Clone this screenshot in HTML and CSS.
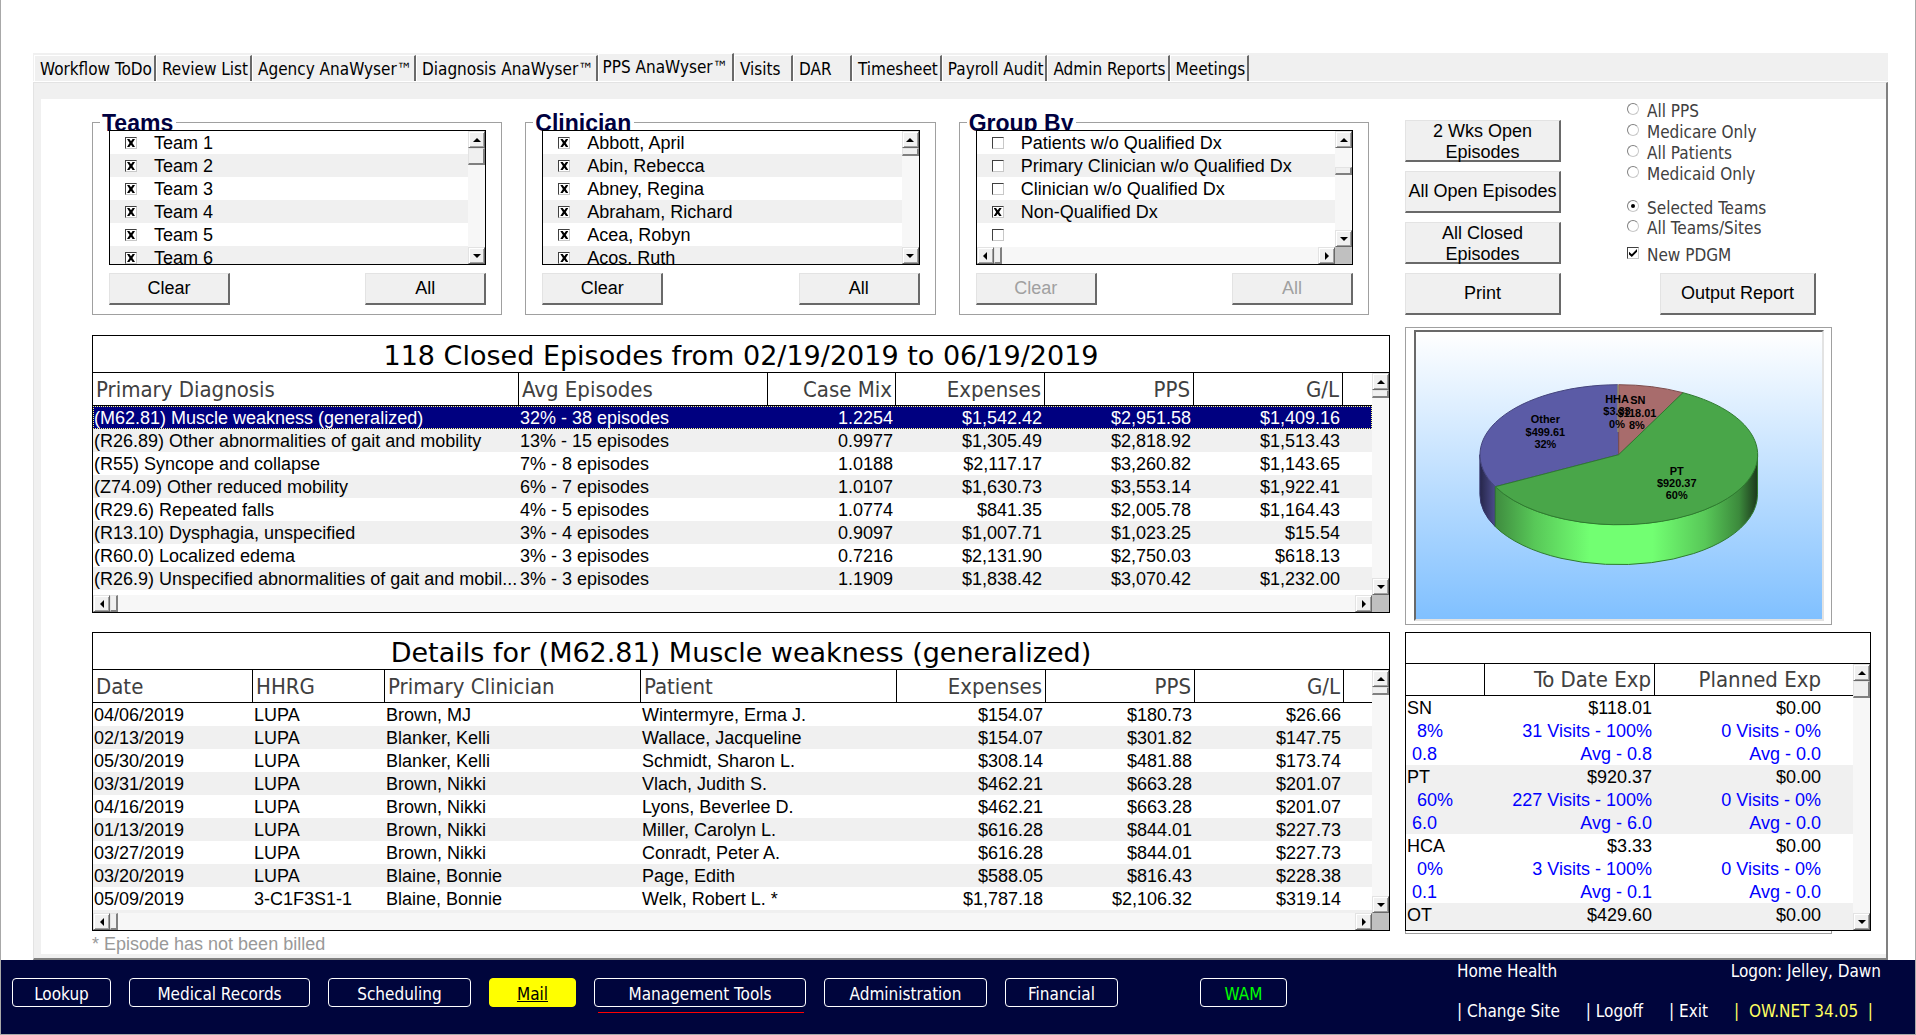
FILE: index.html
```html
<!DOCTYPE html>
<html lang="en">
    <head>
        <meta charset="utf-8">
        <meta name="viewport" content="width=device-width, initial-scale=1">
        <link rel="stylesheet" href="styles.css">
        <title>PPS AnaWyser</title>
    </head>
    <body>
        <div class="workspace">
            <div class="tabs" role="tablist">
                <button type="button" class="tab" role="tab">Workflow ToDo</button>
                <button type="button" class="tab" role="tab">Review List</button>
                <button type="button" class="tab" role="tab">Agency AnaWyser™</button>
                <button type="button" class="tab" role="tab">Diagnosis AnaWyser™</button>
                <button type="button" class="tab selected" role="tab" aria-selected="true">PPS AnaWyser™</button>
                <button type="button" class="tab" role="tab">Visits</button>
                <button type="button" class="tab" role="tab">DAR</button>
                <button type="button" class="tab" role="tab">Timesheet</button>
                <button type="button" class="tab" role="tab">Payroll Audit</button>
                <button type="button" class="tab" role="tab">Admin Reports</button>
                <button type="button" class="tab" role="tab">Meetings</button>
            </div>
            <div class="pane">
                <main class="page">
                    <div class="main">
                        <div class="filters">
                            <fieldset class="filter">
                                <legend>Teams</legend>
                                <div class="list">
                                    <div class="listRows">
                                        <label class="item"><input type="checkbox" class="box" checked>Team 1</label>
                                        <label class="item"><input type="checkbox" class="box" checked>Team 2</label>
                                        <label class="item"><input type="checkbox" class="box" checked>Team 3</label>
                                        <label class="item"><input type="checkbox" class="box" checked>Team 4</label>
                                        <label class="item"><input type="checkbox" class="box" checked>Team 5</label>
                                        <label class="item"><input type="checkbox" class="box" checked>Team 6</label>
                                    </div>
                                    <div class="vbar">
                                        <button type="button" class="arrow up" aria-label="Up"></button>
                                        <div class="thumb tall"></div>
                                        <button type="button" class="arrow down" aria-label="Down"></button>
                                    </div>
                                </div>
                                <div class="filterButtons">
                                    <button type="button" class="btn">Clear</button>
                                    <button type="button" class="btn">All</button>
                                </div>
                            </fieldset>
                            <fieldset class="filter">
                                <legend>Clinician</legend>
                                <div class="list">
                                    <div class="listRows">
                                        <label class="item"><input type="checkbox" class="box" checked>Abbott, April</label>
                                        <label class="item"><input type="checkbox" class="box" checked>Abin, Rebecca</label>
                                        <label class="item"><input type="checkbox" class="box" checked>Abney, Regina</label>
                                        <label class="item"><input type="checkbox" class="box" checked>Abraham, Richard</label>
                                        <label class="item"><input type="checkbox" class="box" checked>Acea, Robyn</label>
                                        <label class="item"><input type="checkbox" class="box" checked>Acos, Ruth</label>
                                    </div>
                                    <div class="vbar">
                                        <button type="button" class="arrow up" aria-label="Up"></button>
                                        <div class="thumb"></div>
                                        <button type="button" class="arrow down" aria-label="Down"></button>
                                    </div>
                                </div>
                                <div class="filterButtons">
                                    <button type="button" class="btn">Clear</button>
                                    <button type="button" class="btn">All</button>
                                </div>
                            </fieldset>
                            <fieldset class="filter">
                                <legend>Group By</legend>
                                <div class="list withHbar">
                                    <div class="listRows">
                                        <label class="item"><input type="checkbox" class="box">Patients w/o Qualified Dx</label>
                                        <label class="item"><input type="checkbox" class="box">Primary Clinician w/o Qualified Dx</label>
                                        <label class="item"><input type="checkbox" class="box">Clinician w/o Qualified Dx</label>
                                        <label class="item"><input type="checkbox" class="box" checked>Non-Qualified Dx</label>
                                        <label class="item"><input type="checkbox" class="box" aria-label="Empty"></label>
                                    </div>
                                    <div class="vbar">
                                        <button type="button" class="arrow up" aria-label="Up"></button>
                                        <div class="thumb scrolled"></div>
                                        <button type="button" class="arrow down" aria-label="Down"></button>
                                    </div>
                                    <div class="hbar">
                                        <button type="button" class="arrow left" aria-label="Left"></button>
                                        <div class="thumb"></div>
                                        <button type="button" class="arrow right" aria-label="Right"></button>
                                    </div>
                                    <div class="corner"></div>
                                </div>
                                <div class="filterButtons">
                                    <button type="button" class="btn" disabled>Clear</button>
                                    <button type="button" class="btn" disabled>All</button>
                                </div>
                            </fieldset>
                        </div>

                        <section class="grid">
                            <h2 class="gridTitle" id="episodesTitle">118 Closed Episodes from 02/19/2019 to 06/19/2019</h2>
                            <div class="gridBody episodesBody">
                                <table class="data" aria-labelledby="episodesTitle">
                                    <colgroup>
                                        <col class="e1"><col class="e2"><col class="e3"><col class="money"><col class="money"><col class="money"><col>
                                    </colgroup>
                                    <thead>
                                        <tr><th>Primary Diagnosis</th><th>Avg Episodes</th><th class="num">Case Mix</th><th class="num">Expenses</th><th class="num">PPS</th><th class="num">G/L</th><th></th></tr>
                                    </thead>
                                    <tbody>
                                        <tr class="current"><td>(M62.81) Muscle weakness (generalized)</td><td>32% - 38 episodes</td><td class="num">1.2254</td><td class="num">$1,542.42</td><td class="num">$2,951.58</td><td class="num">$1,409.16</td><td></td></tr>
                                        <tr><td>(R26.89) Other abnormalities of gait and mobility</td><td>13% - 15 episodes</td><td class="num">0.9977</td><td class="num">$1,305.49</td><td class="num">$2,818.92</td><td class="num">$1,513.43</td><td></td></tr>
                                        <tr><td>(R55) Syncope and collapse</td><td>7% - 8 episodes</td><td class="num">1.0188</td><td class="num">$2,117.17</td><td class="num">$3,260.82</td><td class="num">$1,143.65</td><td></td></tr>
                                        <tr><td>(Z74.09) Other reduced mobility</td><td>6% - 7 episodes</td><td class="num">1.0107</td><td class="num">$1,630.73</td><td class="num">$3,553.14</td><td class="num">$1,922.41</td><td></td></tr>
                                        <tr><td>(R29.6) Repeated falls</td><td>4% - 5 episodes</td><td class="num">1.0774</td><td class="num">$841.35</td><td class="num">$2,005.78</td><td class="num">$1,164.43</td><td></td></tr>
                                        <tr><td>(R13.10) Dysphagia, unspecified</td><td>3% - 4 episodes</td><td class="num">0.9097</td><td class="num">$1,007.71</td><td class="num">$1,023.25</td><td class="num">$15.54</td><td></td></tr>
                                        <tr><td>(R60.0) Localized edema</td><td>3% - 3 episodes</td><td class="num">0.7216</td><td class="num">$2,131.90</td><td class="num">$2,750.03</td><td class="num">$618.13</td><td></td></tr>
                                        <tr><td>(R26.9) Unspecified abnormalities of gait and mobil...</td><td>3% - 3 episodes</td><td class="num">1.1909</td><td class="num">$1,838.42</td><td class="num">$3,070.42</td><td class="num">$1,232.00</td><td></td></tr>
                                    </tbody>
                                </table>
                                <div class="vbar">
                                    <button type="button" class="arrow up" aria-label="Up"></button>
                                    <div class="thumb"></div>
                                    <button type="button" class="arrow down" aria-label="Down"></button>
                                </div>
                            </div>
                            <div class="gridFoot">
                                <div class="hbar">
                                    <button type="button" class="arrow left" aria-label="Left"></button>
                                    <div class="thumb"></div>
                                    <button type="button" class="arrow right" aria-label="Right"></button>
                                </div>
                                <div class="corner"></div>
                            </div>
                        </section>

                        <section class="grid">
                            <h2 class="gridTitle" id="detailsTitle">Details for (M62.81) Muscle weakness (generalized)</h2>
                            <div class="gridBody detailsBody">
                                <table class="data" aria-labelledby="detailsTitle">
                                    <colgroup>
                                        <col class="d1"><col class="d2"><col class="d3"><col class="d4"><col class="money"><col class="money"><col class="money"><col>
                                    </colgroup>
                                    <thead>
                                        <tr><th>Date</th><th>HHRG</th><th>Primary Clinician</th><th>Patient</th><th class="num">Expenses</th><th class="num">PPS</th><th class="num">G/L</th><th></th></tr>
                                    </thead>
                                    <tbody>
                                        <tr><td>04/06/2019</td><td>LUPA</td><td>Brown, MJ</td><td>Wintermyre, Erma J.</td><td class="num">$154.07</td><td class="num">$180.73</td><td class="num">$26.66</td><td></td></tr>
                                        <tr><td>02/13/2019</td><td>LUPA</td><td>Blanker, Kelli</td><td>Wallace, Jacqueline</td><td class="num">$154.07</td><td class="num">$301.82</td><td class="num">$147.75</td><td></td></tr>
                                        <tr><td>05/30/2019</td><td>LUPA</td><td>Blanker, Kelli</td><td>Schmidt, Sharon L.</td><td class="num">$308.14</td><td class="num">$481.88</td><td class="num">$173.74</td><td></td></tr>
                                        <tr><td>03/31/2019</td><td>LUPA</td><td>Brown, Nikki</td><td>Vlach, Judith S.</td><td class="num">$462.21</td><td class="num">$663.28</td><td class="num">$201.07</td><td></td></tr>
                                        <tr><td>04/16/2019</td><td>LUPA</td><td>Brown, Nikki</td><td>Lyons, Beverlee D.</td><td class="num">$462.21</td><td class="num">$663.28</td><td class="num">$201.07</td><td></td></tr>
                                        <tr><td>01/13/2019</td><td>LUPA</td><td>Brown, Nikki</td><td>Miller, Carolyn L.</td><td class="num">$616.28</td><td class="num">$844.01</td><td class="num">$227.73</td><td></td></tr>
                                        <tr><td>03/27/2019</td><td>LUPA</td><td>Brown, Nikki</td><td>Conradt, Peter A.</td><td class="num">$616.28</td><td class="num">$844.01</td><td class="num">$227.73</td><td></td></tr>
                                        <tr><td>03/20/2019</td><td>LUPA</td><td>Blaine, Bonnie</td><td>Page, Edith</td><td class="num">$588.05</td><td class="num">$816.43</td><td class="num">$228.38</td><td></td></tr>
                                        <tr><td>05/09/2019</td><td>3-C1F3S1-1</td><td>Blaine, Bonnie</td><td>Welk, Robert L. *</td><td class="num">$1,787.18</td><td class="num">$2,106.32</td><td class="num">$319.14</td><td></td></tr>
                                        <tr><td colspan="8"></td></tr>
                                    </tbody>
                                </table>
                                <div class="vbar">
                                    <button type="button" class="arrow up" aria-label="Up"></button>
                                    <div class="thumb"></div>
                                    <button type="button" class="arrow down" aria-label="Down"></button>
                                </div>
                            </div>
                            <div class="gridFoot">
                                <div class="hbar">
                                    <button type="button" class="arrow left" aria-label="Left"></button>
                                    <div class="thumb"></div>
                                    <button type="button" class="arrow right" aria-label="Right"></button>
                                </div>
                                <div class="corner"></div>
                            </div>
                        </section>
                        <p class="note">* Episode has not been billed</p>
                    </div>

                    <div class="side">
                        <div class="actions">
                            <div class="actionButtons">
                                <button type="button" class="btn">2 Wks Open Episodes</button>
                                <button type="button" class="btn">All Open Episodes</button>
                                <button type="button" class="btn">All Closed Episodes</button>
                                <button type="button" class="btn">Print</button>
                            </div>
                            <div class="options">
                                <div class="optionGroup spaced">
                                    <label class="option"><input type="radio" class="dot" name="payer">All PPS</label>
                                    <label class="option"><input type="radio" class="dot" name="payer">Medicare Only</label>
                                    <label class="option"><input type="radio" class="dot" name="payer">All Patients</label>
                                    <label class="option"><input type="radio" class="dot" name="payer">Medicaid Only</label>
                                </div>
                                <div class="optionGroup">
                                    <label class="option"><input type="radio" class="dot" name="teams" checked>Selected Teams</label>
                                    <label class="option"><input type="radio" class="dot" name="teams">All Teams/Sites</label>
                                </div>
                                <label class="option"><input type="checkbox" class="box tick" checked>New PDGM</label>
                                <button type="button" class="btn output">Output Report</button>
                            </div>
                        </div>

                        <div class="chart">
                            <svg class="pie" viewBox="0 0 408 287" preserveAspectRatio="none" role="img" aria-label="Expenses by discipline">
                                <defs>
                                    <linearGradient id="sky" x1="0" y1="0" x2="0" y2="1">
                                        <stop offset="0" stop-color="#ffffff"/>
                                        <stop offset="1" stop-color="#80c0ff"/>
                                    </linearGradient>
                                    <linearGradient id="greenSide" x1="0" y1="0" x2="1" y2="0">
                                        <stop offset="0" stop-color="#3f8c3f"/>
                                        <stop offset="0.15" stop-color="#58c858"/>
                                        <stop offset="0.36" stop-color="#72ff72"/>
                                        <stop offset="0.6" stop-color="#72ff72"/>
                                        <stop offset="0.8" stop-color="#58c858"/>
                                        <stop offset="0.93" stop-color="#3c8a3c"/>
                                        <stop offset="1" stop-color="#1c381c"/>
                                    </linearGradient>
                                    <linearGradient id="blueSide" x1="0" y1="0" x2="1" y2="0">
                                        <stop offset="0" stop-color="#26264a"/>
                                        <stop offset="1" stop-color="#4c4c8c"/>
                                    </linearGradient>
                                </defs>
                                <rect width="408" height="287" fill="url(#sky)"/>
                                <path d="M64.2 122.7A139.5 70 0 0 0 79.7 154.7V194.7A139.5 70 0 0 1 64.2 162.7Z" fill="url(#blueSide)" stroke="#34346a"/>
                                <path d="M79.7 154.7A139.5 70 0 0 0 343.2 122.7V162.7A139.5 70 0 0 1 79.7 194.7Z" fill="url(#greenSide)" stroke="#2f7a2f"/>
                                <path d="M203.7 122.7L79.7 154.7A139.5 70 0 0 1 202.7 52.7Z" fill="#5b5ba6" stroke="#44447c"/>
                                <path d="M203.7 122.7V52.7A139.5 70 0 0 1 268.3 60.7Z" fill="#a86c6c" stroke="#7c4c4c"/>
                                <path d="M203.7 122.7L268.3 60.7A139.5 70 0 1 1 79.7 154.7Z" fill="#49a649" stroke="#2f7a2f"/>
                                <path d="M203 52.7V100" stroke="#a8a86c"/>
                                <g class="pieLabels">
                                    <text x="130" y="91">Other</text><text x="130" y="104">$499.61</text><text x="130" y="116">32%</text>
                                    <text x="202" y="71">HHA</text><text x="202" y="83">$3.33</text><text x="202" y="96">0%</text>
                                    <text x="223" y="72">SN</text><text x="222" y="85">$118.01</text><text x="222" y="97">8%</text>
                                    <text x="262" y="143">PT</text><text x="262" y="155">$920.37</text><text x="262" y="167">60%</text>
                                </g>
                            </svg>
                        </div>

                        <section class="grid">
                            <div class="gridTitle short"></div>
                            <div class="gridBody visitsBody">
                                <table class="data visits" aria-label="Visits">
                                    <colgroup>
                                        <col class="v1"><col class="v2"><col class="v3"><col>
                                    </colgroup>
                                    <thead>
                                        <tr><th></th><th class="num">To Date Exp</th><th class="num open">Planned Exp</th><th></th></tr>
                                    </thead>
                                    <tbody>
                                        <tr><td>SN</td><td class="num">$118.01</td><td class="num">$0.00</td><td></td></tr>
                                        <tr class="sub"><td>&nbsp;&nbsp;8%</td><td class="num">31 Visits - 100%</td><td class="num">0 Visits - 0%</td><td></td></tr>
                                        <tr class="sub"><td>&nbsp;0.8</td><td class="num">Avg - 0.8</td><td class="num">Avg - 0.0</td><td></td></tr>
                                    </tbody>
                                    <tbody>
                                        <tr><td>PT</td><td class="num">$920.37</td><td class="num">$0.00</td><td></td></tr>
                                        <tr class="sub"><td>&nbsp;&nbsp;60%</td><td class="num">227 Visits - 100%</td><td class="num">0 Visits - 0%</td><td></td></tr>
                                        <tr class="sub"><td>&nbsp;6.0</td><td class="num">Avg - 6.0</td><td class="num">Avg - 0.0</td><td></td></tr>
                                    </tbody>
                                    <tbody>
                                        <tr><td>HCA</td><td class="num">$3.33</td><td class="num">$0.00</td><td></td></tr>
                                        <tr class="sub"><td>&nbsp;&nbsp;0%</td><td class="num">3 Visits - 100%</td><td class="num">0 Visits - 0%</td><td></td></tr>
                                        <tr class="sub"><td>&nbsp;0.1</td><td class="num">Avg - 0.1</td><td class="num">Avg - 0.0</td><td></td></tr>
                                    </tbody>
                                    <tbody>
                                        <tr><td>OT</td><td class="num">$429.60</td><td class="num">$0.00</td><td></td></tr>
                                        <tr><td colspan="4"></td></tr>
                                    </tbody>
                                </table>
                                <div class="vbar">
                                    <button type="button" class="arrow up" aria-label="Up"></button>
                                    <div class="thumb tall"></div>
                                    <button type="button" class="arrow down" aria-label="Down"></button>
                                </div>
                            </div>
                        </section>
                        <div class="sideEdge"></div>
                    </div>
                </main>
            </div>
        </div>

        <footer class="footer">
            <nav class="menu">
                <button type="button" class="menuItem lookup">Lookup</button>
                <button type="button" class="menuItem records">Medical Records</button>
                <button type="button" class="menuItem scheduling">Scheduling</button>
                <button type="button" class="menuItem mail">Mail</button>
                <button type="button" class="menuItem tools">Management Tools</button>
                <button type="button" class="menuItem admin">Administration</button>
                <button type="button" class="menuItem financial">Financial</button>
                <button type="button" class="menuItem wam">WAM</button>
            </nav>
            <div class="session">
                <div class="sessionRow"><span>Home Health</span><span>Logon: Jelley, Dawn</span></div>
                <div class="sessionRow links">
                    <a href="#">| Change Site</a>
                    <a href="#">| Logoff</a>
                    <a href="#">| Exit</a>
                    <span class="version">|&nbsp; OW.NET 34.05 &nbsp;|</span>
                </div>
            </div>
        </footer>
    </body>
</html>
```
FILE: styles.css
```css
* {
    box-sizing: border-box;
}

body {
    margin: 0;
    padding-top: 53px;
    border-left: 1px solid #a8a8a8;
    border-right: 1px solid #a8a8a8;
    font: 18px/22px "Liberation Sans", Arial, sans-serif;
    color: #000;
    background-color: #fff;
}

button {
    font: inherit;
    color: inherit;
}

.workspace {
    margin: 0 27px 0 32px;
    background-color: #f0f0f0;
}

/* tabs */

.tabs {
    display: flex;
    align-items: flex-end;
    height: 29px;
    padding-left: 1px;
    font: 17px/24px "DejaVu Sans Condensed", "DejaVu Sans", Tahoma, sans-serif;
    border-bottom: 1px solid #fff;
}

.tab {
    min-width: 59px;
    height: 26px;
    padding: 0 2px 0 5px;
    text-align: left;
    white-space: nowrap;
    background-color: #f0f0f0;
    border: 1px solid #fff;
    border-right: 2px solid #696969;
    border-bottom: none;
}

.tab.selected {
    height: 28px;
    padding: 0 4px 2px;
}

.pane {
    padding: 16px 0 4px 7px;
    border-top: 1px solid #e3e3e3;
    border-left: 1px solid #e3e3e3;
    border-right: 2px solid #808080;
    border-bottom: 2px solid #808080;
}

.page {
    display: grid;
    grid-template-columns: 1298fr 466fr;
    gap: 15px;
    padding: 0 15px 0 51px;
    background-color: #fff;
}

/* filters */

.main {
    padding-top: 10px;
}

.filters {
    display: grid;
    grid-template-columns: repeat(3, 1fr);
    gap: 23px;
    margin-bottom: 20px;
    padding-right: 21px;
}

.filter {
    min-width: 0;
    margin: 0;
    padding: 0 15px 9px 16px;
    border: 1px solid #a0a0a0;
}

.filter legend {
    margin-left: -9px;
    padding: 3px 3px 0 2px;
    font-size: 23px;
    line-height: 23px;
    font-weight: bold;
    color: #000040;
}

.list {
    position: relative;
    display: grid;
    grid-template-columns: 1fr 17px;
    height: 135px;
    margin-top: -5px;
    overflow: hidden;
    background-color: #fff;
    border: 1px solid #000;
}

.list.withHbar {
    grid-template-rows: 1fr 17px;
}

.listRows {
    overflow: hidden;
}

.item {
    display: flex;
    align-items: center;
    gap: 17px;
    height: 23px;
    padding: 1px 0 0 15px;
    white-space: nowrap;
}

.item:nth-child(even) {
    background-color: #f0f0f0;
}

.filterButtons {
    display: flex;
    justify-content: space-between;
    margin-top: 8px;
}

.filterButtons .btn {
    width: 121px;
    height: 32px;
}

/* controls */

.btn {
    padding: 0;
    line-height: 21px;
    background-color: #f0f0f0;
    border: 1px solid #e3e3e3;
    border-right: 2px solid #696969;
    border-bottom: 2px solid #696969;
}

.btn:disabled {
    color: #a0a0a0;
}

.box,
.dot {
    flex: none;
    appearance: none;
    display: grid;
    place-items: center;
    width: 12px;
    height: 12px;
    margin: 0;
    background-color: #fff;
    border: 1px solid #c8c8c8;
    border-top-color: #404040;
    border-left-color: #404040;
}

.dot {
    border-radius: 50%;
    border-top-color: #808080;
    border-left-color: #808080;
}

.box:checked::before {
    content: "";
    width: 8px;
    height: 8px;
    background-color: #000;
    clip-path: polygon(0 0, 30% 0, 50% 28%, 70% 0, 100% 0, 68% 50%, 100% 100%, 70% 100%, 50% 72%, 30% 100%, 0 100%, 32% 50%);
}

.box.tick:checked::before {
    clip-path: polygon(0 35%, 35% 65%, 100% 0, 100% 35%, 35% 100%, 0 70%);
}

.dot:checked::before {
    content: "";
    width: 4px;
    height: 4px;
    border-radius: 50%;
    background-color: #000;
}

/* scroll bars */

.vbar,
.hbar {
    display: flex;
    background-color: #f7f7f7;
}

.vbar {
    flex: none;
    flex-direction: column;
    width: 17px;
}

.hbar {
    flex: 1;
    height: 17px;
}

.arrow {
    display: grid;
    place-items: center;
    flex: none;
    width: 17px;
    height: 17px;
    padding: 0;
    background-color: #f0f0f0;
    border: 1px solid #e3e3e3;
    border-right-color: #696969;
    border-bottom-color: #696969;
    box-shadow: inset 1px 1px #fff, inset -1px -1px #a0a0a0;
}

.arrow::before {
    content: "";
    border: 4px solid transparent;
}

.arrow.up::before {
    border-top: none;
    border-bottom-color: #000;
}

.arrow.down::before {
    border-bottom: none;
    border-top-color: #000;
}

.arrow.left::before {
    border-left: none;
    border-right-color: #000;
}

.arrow.right::before {
    border-right: none;
    border-left-color: #000;
}

.arrow.down {
    margin-top: auto;
}

.arrow.right {
    margin-left: auto;
}

.thumb {
    flex: none;
    background-color: #f0f0f0;
    border: 1px solid #e3e3e3;
    border-right: 2px solid #808080;
    border-bottom: 2px solid #808080;
}

.vbar .thumb {
    height: 8px;
}

.vbar .thumb.tall {
    height: 17px;
}

.vbar .thumb.scrolled {
    margin-top: 19px;
}

.hbar .thumb {
    width: 8px;
}

.corner {
    width: 17px;
    height: 17px;
    background-color: #c0c0c0;
}

/* data grids */

.grid {
    background-color: #fff;
    border: 1px solid #000;
}

.main .grid + .grid {
    margin-top: 19px;
}

.gridTitle {
    height: 37px;
    margin: 0;
    padding-top: 2px;
    font: 27px/35px "DejaVu Sans", Verdana, sans-serif;
    text-align: center;
    white-space: nowrap;
    border-bottom: 1px solid #000;
}

.gridTitle.short {
    height: 31px;
}

.gridBody {
    display: flex;
    align-items: flex-start;
    overflow: hidden;
}

.gridBody .vbar {
    height: 100%;
}

.episodesBody {
    height: 222px;
}

.detailsBody {
    height: 243px;
}

.visitsBody {
    height: 266px;
}

.gridFoot {
    display: flex;
}

.data {
    flex: 1;
    width: 100%;
    min-width: 0;
    table-layout: fixed;
    border-collapse: separate;
    border-spacing: 0;
}

.data th {
    height: 33px;
    padding: 2px 3px 0;
    font: 22px/30px "DejaVu Sans Condensed", "DejaVu Sans", Tahoma, sans-serif;
    color: #404040;
    text-align: left;
    white-space: nowrap;
    border-right: 1px solid #000;
    border-bottom: 1px solid #000;
}

.data.visits th {
    height: 32px;
    padding-top: 0;
}

.data th:last-child,
.data th.open {
    border-right: none;
}

.data td {
    height: 23px;
    padding: 1px 3px 0 1px;
    white-space: nowrap;
}

.data .num {
    text-align: right;
}

.data tr:nth-child(even) td {
    background-color: #f0f0f0;
}

.data .current td {
    color: #fff;
    background-color: #000080;
}

.data .current {
    outline: 1px dotted #ffff7f;
    outline-offset: -1px;
}

.data.visits tbody td {
    background-color: #fff;
}

.data.visits tbody:nth-of-type(even) td {
    background-color: #f0f0f0;
}

.visits .sub {
    color: #0000ff;
}

.e1 { width: 426px; }
.e2 { width: 249px; }
.e3 { width: 128px; }
.money { width: 149px; }
.d1 { width: 160px; }
.d2 { width: 132px; }
.d3 { width: 256px; }
.d4 { width: 256px; }
.v1 { width: 79px; }
.v2 { width: 170px; }
.v3 { width: 169px; }

.note {
    margin: 3px 0 0;
    line-height: 20px;
    color: #999;
}

/* right column */

.side {
    padding-top: 21px;
}

.actions {
    display: flex;
    gap: 66px;
}

.actionButtons {
    display: flex;
    flex-direction: column;
    gap: 9px;
}

.actionButtons .btn,
.output {
    width: 156px;
    height: 42px;
}

.options {
    display: flex;
    flex-direction: column;
    width: 189px;
    margin-top: -19px;
    font: 17px/20px "DejaVu Sans Condensed", "DejaVu Sans", Tahoma, sans-serif;
    color: #404040;
}

.optionGroup {
    display: flex;
    flex-direction: column;
    margin-bottom: 7px;
}

.optionGroup.spaced {
    gap: 1px;
    margin-bottom: 14px;
}

.option {
    display: flex;
    align-items: flex-start;
    gap: 8px;
    height: 20px;
    white-space: nowrap;
}

.option .dot,
.option .box {
    margin-top: 2px;
}

.output {
    align-self: flex-end;
    margin-top: auto;
    font-family: "Liberation Sans", Arial, sans-serif;
    font-size: 18px;
    color: #000;
}

.chart {
    height: 298px;
    margin: 12px 39px 7px 0;
    padding: 2px 7px 3px 8px;
    border: 1px solid #a0a0a0;
}

.pie {
    display: block;
    width: 100%;
    height: 291px;
    border: 2px solid #e3e3e3;
    border-top-color: #696969;
    border-left-color: #696969;
}

.pieLabels {
    font-size: 11px;
    font-weight: bold;
    text-anchor: middle;
}

.sideEdge {
    height: 3px;
    margin-right: 39px;
    border: 1px solid #a0a0a0;
    border-top: none;
}

/* footer */

.footer {
    display: flex;
    justify-content: space-between;
    height: 75px;
    padding: 0 34px 0 11px;
    font: 17px/20px "DejaVu Sans Condensed", "DejaVu Sans", Tahoma, sans-serif;
    color: #fff;
    background-color: #00053c;
    border-bottom: 1px solid #a8a8a8;
}

.menu {
    display: flex;
    gap: 18px;
    padding-top: 18px;
}

.menuItem {
    position: relative;
    height: 29px;
    padding: 3px 0 0;
    white-space: nowrap;
    background-color: transparent;
    border: 1px solid #fff;
    border-radius: 4px;
}

.lookup { width: 99px; }
.records { width: 181px; }
.scheduling { width: 143px; }
.tools { width: 212px; }
.admin { width: 163px; }
.financial { width: 113px; }

.mail {
    width: 87px;
    color: #000;
    text-decoration: underline;
    background-color: #ffff00;
    border-color: #ffff00;
}

.tools::after {
    content: "";
    position: absolute;
    left: 3px;
    right: 1px;
    top: 33px;
    border-top: 1px solid #f00;
}

.wam {
    width: 87px;
    margin-left: 64px;
    color: #00ff00;
}

.session {
    width: 424px;
    padding-top: 1px;
}

.sessionRow {
    display: flex;
    justify-content: space-between;
    margin-bottom: 20px;
}

.session a {
    color: inherit;
    text-decoration: none;
}

.links {
    padding-right: 8px;
}

.version {
    color: #ffff60;
}
```
